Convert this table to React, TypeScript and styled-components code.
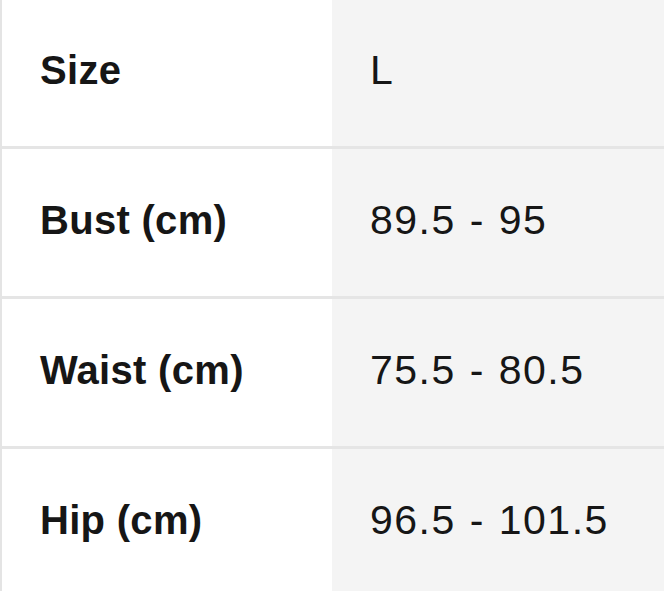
import React from "react";
import styled, { createGlobalStyle } from "styled-components";

const Global = createGlobalStyle`
  html, body { margin: 0; padding: 0; background: #ffffff; }
  body { font-family: "Liberation Sans", Arial, Helvetica, sans-serif; overflow: hidden; }
`;

const Table = styled.div`
  width: 664px;
  margin-top: -1px;
  border-left: 2px solid #e4e4e4;
  box-sizing: border-box;
  display: flex;
  flex-direction: column;
`;

const Row = styled.div`
  display: grid;
  grid-template-columns: 330px 1fr;
  height: 150px;
  border-bottom: 3px solid #e5e5e5;
  box-sizing: border-box;
`;

const Cell = styled.div<{ $head?: boolean }>`
  display: flex;
  align-items: center;
  padding: 0 0 5px 38px;
  box-sizing: border-box;
  background: ${(p) => (p.$head ? "#ffffff" : "#f4f4f4")};
  color: #161616;
  font-size: ${(p) => (p.$head ? "40px" : "41px")};
  font-weight: ${(p) => (p.$head ? 700 : 400)};
  letter-spacing: ${(p) => (p.$head ? "0.3px" : "1.5px")};
  word-spacing: ${(p) => (p.$head ? "0" : "1px")};
  white-space: nowrap;
`;

const rows: [string, string][] = [
  ["Size", "L"],
  ["Bust (cm)", "89.5 - 95"],
  ["Waist (cm)", "75.5 - 80.5"],
  ["Hip (cm)", "96.5 - 101.5"],
];

export default function App() {
  return (
    <>
      <Global />
      <Table>
        {rows.map(([k, v]) => (
          <Row key={k}>
            <Cell $head>{k}</Cell>
            <Cell>{v}</Cell>
          </Row>
        ))}
      </Table>
    </>
  );
}
